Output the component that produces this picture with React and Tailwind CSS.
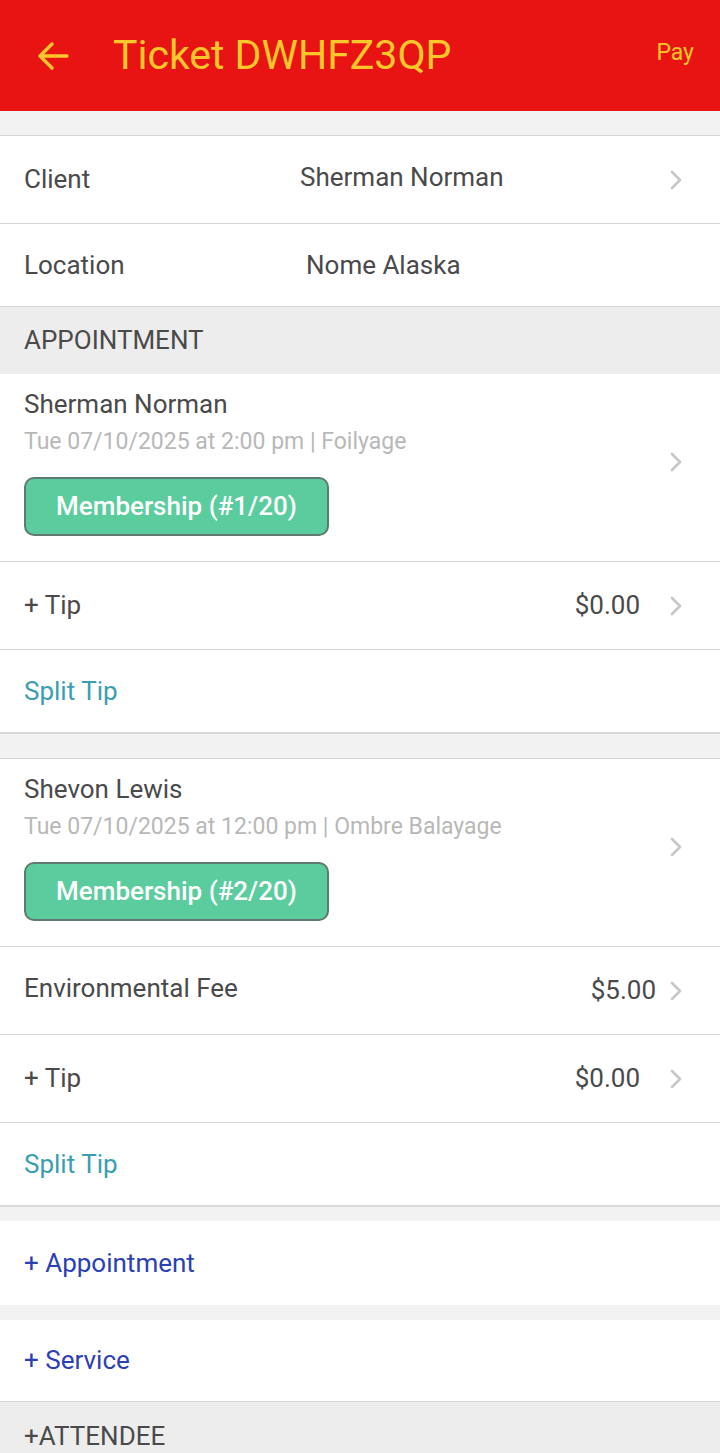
import React from 'react';

const Chevron = () => (
  <svg width="16" height="22" viewBox="0 0 16 22" className="shrink-0">
    <path d="M4 3 L12 11 L4 19" fill="none" stroke="#c7c7c7" strokeWidth="2.6" strokeLinecap="round" strokeLinejoin="round" />
  </svg>
);

const Row = ({ label, value, chevron, className = '' }) => (
  <div className={`flex items-center h-[88px] pl-6 pr-9 bg-white border-b border-[#d6d6d6] ${className}`}>
    <span className="flex-1 text-[26px] text-[#4a4a4a]">{label}</span>
    {value && <span className="text-[26px] text-[#4a4a4a] mr-7">{value}</span>}
    {chevron && <Chevron />}
  </div>
);

const LinkRow = ({ text, color, bordered }) => (
  <div className={`flex items-center h-[84px] px-6 bg-white ${bordered ? 'border-b-2 border-[#d9d9d9]' : ''}`}>
    <span className={`text-[26px] ${color}`}>{text}</span>
  </div>
);

const AppointmentCard = ({ name, when, badge }) => (
  <div className="flex items-center bg-white border-b border-[#d6d6d6] pl-6 pr-9 pt-[13px] pb-[25px]">
    <div className="flex-1">
      <p className="text-[26px] text-[#4a4a4a] leading-[34px]">{name}</p>
      <p className="text-[23px] text-[#b8b8b8] leading-[28px] mt-[7px]">{when}</p>
      <div className="mt-[21px] w-[305px] h-[59px] rounded-[10px] bg-[#5bcc9e] border-2 border-[#5e7a72] flex items-center justify-center">
        <span className="text-[26px] font-medium text-white">{badge}</span>
      </div>
    </div>
    <Chevron />
  </div>
);

const App = () => {
  return (
    <div className="w-[720px] min-h-[1453px] bg-[#f2f2f2] font-['Roboto',sans-serif]">
      <div className="h-[111px] bg-[#e81414] flex items-center pl-[36px] pr-[26px]">
        <svg width="34" height="32" viewBox="0 0 34 32" className="shrink-0">
          <path d="M31 16 H4 M16 4 L4 16 L16 28" fill="none" stroke="#fcc72a" strokeWidth="3.4" strokeLinecap="round" strokeLinejoin="round" />
        </svg>
        <h1 className="ml-[43px] flex-1 text-[41px] text-[#fcc72a] leading-none">Ticket DWHFZ3QP</h1>
        <span className="text-[23px] text-[#fcc72a] -mt-[4px]">Pay</span>
      </div>

      <div className="h-[25px] border-b border-[#d6d6d6]" />

      <div className="flex items-center h-[88px] pl-6 pr-9 bg-white border-b border-[#d6d6d6]">
        <span className="w-[276px] text-[26px] text-[#4a4a4a]">Client</span>
        <span className="flex-1 text-[26px] text-[#4a4a4a] -mt-[4px]">Sherman Norman</span>
        <Chevron />
      </div>
      <div className="flex items-center h-[83px] pl-6 pr-9 bg-white border-b border-[#d6d6d6]">
        <span className="w-[282px] text-[26px] text-[#4a4a4a]">Location</span>
        <span className="flex-1 text-[26px] text-[#4a4a4a]">Nome Alaska</span>
      </div>

      <div className="h-[67px] bg-[#ededed] flex items-center px-6">
        <span className="text-[26px] text-[#4a4a4a]">APPOINTMENT</span>
      </div>

      <AppointmentCard name="Sherman Norman" when="Tue 07/10/2025 at 2:00 pm | Foilyage" badge="Membership (#1/20)" />
      <Row label="+ Tip" value="$0.00" chevron />
      <LinkRow text="Split Tip" color="text-[#3a9eb0]" bordered />

      <div className="h-[25px] border-b border-[#d6d6d6]" />

      <AppointmentCard name="Shevon Lewis" when="Tue 07/10/2025 at 12:00 pm | Ombre Balayage" badge="Membership (#2/20)" />
      <div className="flex items-center h-[88px] pl-6 pr-9 bg-white border-b border-[#d6d6d6]">
        <span className="flex-1 text-[26px] text-[#4a4a4a] -mt-[4px]">Environmental Fee</span>
        <span className="text-[26px] text-[#4a4a4a] mr-[12px]">$5.00</span>
        <Chevron />
      </div>
      <Row label="+ Tip" value="$0.00" chevron />
      <LinkRow text="Split Tip" color="text-[#3a9eb0]" bordered />

      <div className="h-[14px]" />
      <LinkRow text="+ Appointment" color="text-[#2b40b5]" />
      <div className="h-[15px]" />
      <div className="flex items-center h-[82px] px-6 bg-white border-b border-[#d6d6d6]">
        <span className="text-[26px] text-[#2b40b5]">+ Service</span>
      </div>
      <div className="h-[51px] bg-[#ededed] flex items-center px-6 pt-[18px]">
        <span className="text-[26px] text-[#4a4a4a]">+ATTENDEE</span>
      </div>
    </div>
  );
};

export default App;
